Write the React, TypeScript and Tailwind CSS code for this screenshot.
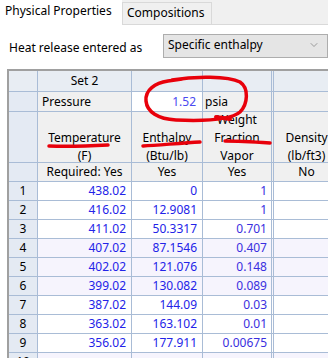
import { ChevronDown } from "lucide-react"

const rows = [
  { n: 1, t: "438.02", h: "0", w: "1" },
  { n: 2, t: "416.02", h: "12.9081", w: "1" },
  { n: 3, t: "411.02", h: "50.3317", w: "0.701" },
  { n: 4, t: "407.02", h: "87.1546", w: "0.407" },
  { n: 5, t: "402.02", h: "121.076", w: "0.148" },
  { n: 6, t: "399.02", h: "130.082", w: "0.089" },
  { n: 7, t: "387.02", h: "144.09", w: "0.03" },
  { n: 8, t: "363.02", h: "163.102", w: "0.01" },
  { n: 9, t: "356.02", h: "177.911", w: "0.00675" },
  { n: 10, t: "", h: "", w: "" },
]

const shaded = (n: number) => n === 4 || n === 5 || n === 6 || n === 10

const rh = "w-[29px] shrink-0 border-r border-b border-[#a9bcd6]"
const c1 = "w-[94px] shrink-0 border-r border-b border-[#a9bcd6]"
const c2 = "w-[71px] shrink-0 border-r border-b border-[#a9bcd6]"
const c3 = "w-[71px] shrink-0 border-r-[3px] border-double border-b border-[#a9bcd6]"
const c4 = "w-[66px] shrink-0 border-r border-b border-[#a9bcd6]"

function Marks() {
  return (
    <svg className="absolute inset-0 pointer-events-none" width="328" height="358" viewBox="0 0 328 358">
      <g fill="none" stroke="#e8000b" strokeWidth="3.5" strokeLinecap="round" strokeLinejoin="round">
        <path d="M172 80 C195 76 228 76 240 82 C249 88 248 104 240 112 C230 121 200 121 176 120 C158 119 147 112 146 101 C145 90 155 83 168 81 L182 79" />
        <path d="M49 146 C70 147 90 146 108 145" />
        <path d="M143 146 C160 145 182 143 200 142" />
        <path d="M225 141 C240 141 255 142 270 143" />
        <path d="M216 117 L230 119" strokeWidth="4" />
      </g>
    </svg>
  )
}

export default function App() {
  return (
    <div className="relative w-[328px] h-[358px] overflow-hidden bg-white text-[12px] text-black font-['Noto_Sans',sans-serif]">
      {/* tabs */}
      <div className="flex h-[25px] bg-[#f0f0f0]">
        <div className="w-[122px] h-[25px] bg-white pl-[5px] pt-[2px] leading-[18px]">Physical Properties</div>
        <div className="w-[90px] mt-[2px] h-[23px] border border-[#d9d9d9] bg-[#f0f0f0] pl-[4px] leading-[20px]">Compositions</div>
        <div className="flex-1 border-b border-[#d9d9d9]" />
      </div>

      {/* heat release */}
      <div className="flex items-center h-[24px] mt-[9px]">
        <span className="ml-[9px] w-[154px] pt-[3px]">Heat release entered as</span>
        <div className="flex-1 flex items-center h-[24px] border border-[#adadad] bg-[#e5e5e5] pl-[4px] pb-[2px]">
          <span className="flex-1">Specific enthalpy</span>
          <ChevronDown className="w-[12px] h-[12px] mr-[7px] text-[#666]" strokeWidth={1.2} />
        </div>
      </div>

      {/* grid */}
      <div className="ml-[7px] mt-[11px] border-t-2 border-l-2 border-t-[#a0a0a0] border-l-[#a0a0a0] text-center">
        <div className="flex h-[21px] bg-[#e8edf3] leading-[20px]">
          <div className={rh} />
          <div className={c1}>Set 2</div>
          <div className={c2} />
          <div className={c3} />
          <div className={c4} />
        </div>
        <div className="flex h-[20px] leading-[19px]">
          <div className={`${rh} bg-[#e4eaf3]`} />
          <div className={`${c1} bg-[#f0f0f0] text-left pl-[4px]`}>Pressure</div>
          <div className={`${c2} bg-white text-right pr-[6px] text-[#4a4af0]`}>1.52</div>
          <div className={`${c3} bg-[#f0f0f0] text-left pl-[2px]`}>psia</div>
          <div className={`${c4} bg-[#f0f0f0]`} />
        </div>
        <div className="flex h-[51px] leading-[18px] bg-[#f0f0f0]">
          <div className={`${rh} bg-[#e4eaf3]`} />
          <div className={`${c1} flex flex-col justify-end`}>
            <div className="-mb-[3px]">Temperature<br />(F)</div>
          </div>
          <div className={`${c2} flex flex-col justify-end`}>
            <div className="-mb-[3px]">Enthalpy<br />(Btu/lb)</div>
          </div>
          <div className={`${c3} flex flex-col justify-end`}>
            <div className="-mb-[3px]">Weight<br />Fraction<br />Vapor</div>
          </div>
          <div className={`${c4} flex flex-col justify-end`}>
            <div className="-mb-[3px]">Density<br />(lb/ft3)</div>
          </div>
        </div>
        <div className="flex h-[19px] leading-[18px] bg-[#f0f0f0]">
          <div className={`${rh} bg-[#e4eaf3]`} />
          <div className={c1}>Required: Yes</div>
          <div className={c2}>Yes</div>
          <div className={c3}>Yes</div>
          <div className={c4}>No</div>
        </div>
        {rows.map((r) => (
          <div key={r.n} className={`flex h-[19px] leading-[18px] ${shaded(r.n) ? "bg-[#f6f4fd]" : "bg-white"}`}>
            <div className={`${rh} bg-[#e4eaf3]`}>{r.n}</div>
            <div className={`${c1} text-right pr-[5px] text-[#2323e8]`}>{r.t}</div>
            <div className={`${c2} text-right pr-[5px] text-[#2323e8]`}>{r.h}</div>
            <div className={`${c3} text-right pr-[4px] text-[#3a2fe0]`}>{r.w}</div>
            <div className={c4} />
          </div>
        ))}
      </div>

      <Marks />
    </div>
  )
}
